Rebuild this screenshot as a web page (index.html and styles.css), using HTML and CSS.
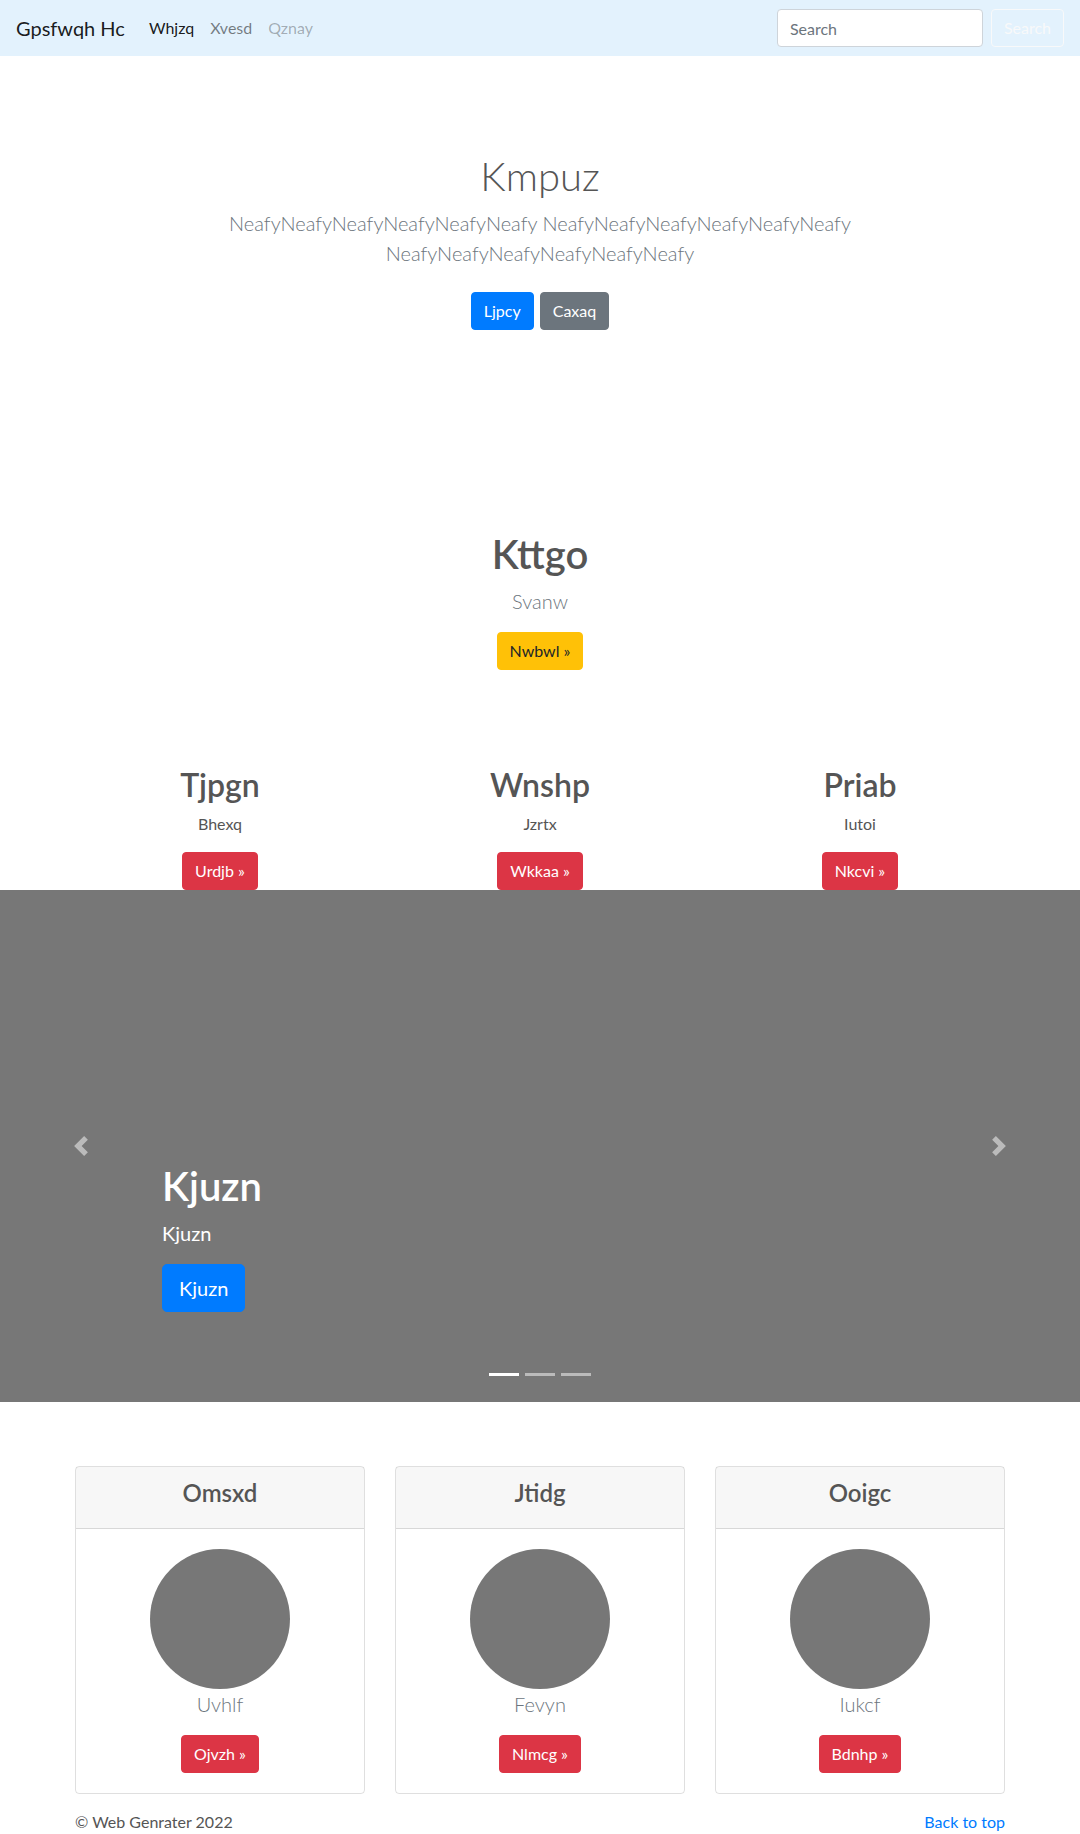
FILE: index.html
```html
<!DOCTYPE html>
<html lang="en">
<head>
<meta charset="utf-8">
<title>Gpsfwqh Hc</title>
<link rel="stylesheet" href="styles.css">
</head>
<body>
<nav class="navbar">
  <a class="brand" href="#">Gpsfwqh Hc</a>
  <ul class="nav">
    <li><a class="nav-link active" href="#">Whjzq</a></li>
    <li><a class="nav-link" href="#">Xvesd</a></li>
    <li><a class="nav-link disabled" href="#">Qznay</a></li>
  </ul>
  <form class="search">
    <input class="search-input" type="search" placeholder="Search">
    <button class="btn btn-outline-light" type="button">Search</button>
  </form>
</nav>

<main>
  <section class="jumbotron">
    <div class="jumbo-container">
      <h1 class="jumbo-heading">Kmpuz</h1>
      <p class="lead muted">NeafyNeafyNeafyNeafyNeafyNeafy NeafyNeafyNeafyNeafyNeafyNeafy NeafyNeafyNeafyNeafyNeafyNeafy</p>
      <p class="btn-row"><a class="btn btn-primary" href="#">Ljpcy</a><a class="btn btn-secondary" href="#">Caxaq</a></p>
    </div>
  </section>

  <section class="feature">
    <h1 class="feature-title">Kttgo</h1>
    <p class="lead muted">Svanw</p>
    <p class="last"><a class="btn btn-warning" href="#">Nwbwl »</a></p>
  </section>

  <section class="container columns">
    <div class="col">
      <h2 class="col-title">Tjpgn</h2>
      <p>Bhexq</p>
      <p class="last"><a class="btn btn-danger" href="#">Urdjb »</a></p>
    </div>
    <div class="col">
      <h2 class="col-title">Wnshp</h2>
      <p>Jzrtx</p>
      <p class="last"><a class="btn btn-danger" href="#">Wkkaa »</a></p>
    </div>
    <div class="col">
      <h2 class="col-title">Priab</h2>
      <p>Iutoi</p>
      <p class="last"><a class="btn btn-danger" href="#">Nkcvi »</a></p>
    </div>
  </section>

  <section class="carousel">
    <ol class="indicators">
      <li class="indicator active"></li>
      <li class="indicator"></li>
      <li class="indicator"></li>
    </ol>
    <a class="control control-prev" href="#">
      <svg class="control-icon" viewBox="0 0 8 8" width="20" height="20"><path fill="#fff" d="M5.25 0l-4 4 4 4 1.5-1.5L4.25 4l2.5-2.5L5.25 0z"/></svg>
    </a>
    <a class="control control-next" href="#">
      <svg class="control-icon" viewBox="0 0 8 8" width="20" height="20"><path fill="#fff" d="M2.75 0l-1.5 1.5L3.75 4l-2.5 2.5L2.75 8l4-4-4-4z"/></svg>
    </a>
    <div class="caption">
      <h1 class="caption-title">Kjuzn</h1>
      <p class="caption-text">Kjuzn</p>
      <p class="caption-actions"><a class="btn btn-lg btn-primary" href="#">Kjuzn</a></p>
    </div>
  </section>

  <section class="container cards">
    <div class="card">
      <div class="card-header"><h4 class="card-title">Omsxd</h4></div>
      <div class="card-body">
        <div class="avatar"></div>
        <p class="lead muted">Uvhlf</p>
        <p class="last"><a class="btn btn-danger" href="#">Ojvzh »</a></p>
      </div>
    </div>
    <div class="card">
      <div class="card-header"><h4 class="card-title">Jtidg</h4></div>
      <div class="card-body">
        <div class="avatar"></div>
        <p class="lead muted">Fevyn</p>
        <p class="last"><a class="btn btn-danger" href="#">Nlmcg »</a></p>
      </div>
    </div>
    <div class="card">
      <div class="card-header"><h4 class="card-title">Ooigc</h4></div>
      <div class="card-body">
        <div class="avatar"></div>
        <p class="lead muted">Iukcf</p>
        <p class="last"><a class="btn btn-danger" href="#">Bdnhp »</a></p>
      </div>
    </div>
  </section>

  <footer class="container footer">
    <p>© Web Genrater 2022</p>
    <p><a class="link" href="#">Back to top</a></p>
  </footer>
</main>
</body>
</html>
```
FILE: styles.css
```css
* { box-sizing: border-box; }
html, body { margin: 0; padding: 0; }
body {
  font-family: Lato, "Noto Sans", sans-serif;
  font-size: 16px;
  line-height: 1.5;
  color: #555;
  background: #fff;
}
a { text-decoration: none; }
p { margin: 0 0 16px; }
h1, h2, h4 { margin: 0 0 8px; line-height: 1.2; }

/* navbar */
.navbar {
  display: flex;
  align-items: center;
  height: 56px;
  padding: 8px 16px;
  background: #e3f2fd;
}
.brand {
  font-size: 20px;
  line-height: 30px;
  padding: 5px 0;
  margin-right: 16px;
  color: rgba(0,0,0,.9);
}
.nav {
  display: flex;
  list-style: none;
  margin: 0;
  padding: 0;
  flex: 1;
}
.nav-link {
  display: block;
  padding: 8px;
  color: rgba(0,0,0,.5);
}
.nav-link.active { color: rgba(0,0,0,.9); }
.nav-link.disabled { color: rgba(0,0,0,.3); }
.search { display: flex; align-items: center; }
.search-input {
  width: 206px;
  height: 38px;
  padding: 6px 12px;
  font: inherit;
  font-size: 16px;
  color: #495057;
  background: #fff;
  border: 1px solid #ced4da;
  border-radius: 4px;
  margin-right: 8px;
}
.search-input::placeholder { color: #6c757d; }

/* buttons */
.btn {
  display: inline-block;
  font-family: inherit;
  font-size: 16px;
  line-height: 24px;
  padding: 6px 12px;
  border: 1px solid transparent;
  border-radius: 4px;
  text-align: center;
  vertical-align: middle;
}
.btn-lg { font-size: 20px; line-height: 30px; padding: 8px 16px; border-radius: 5px; }
.btn-primary { background: #007bff; border-color: #007bff; color: #fff; }
.btn-secondary { background: #6c757d; border-color: #6c757d; color: #fff; }
.btn-warning { background: #ffc107; border-color: #ffc107; color: #212529; }
.btn-danger { background: #dc3545; border-color: #dc3545; color: #fff; }
.btn-outline-light { background: transparent; border-color: #f8f9fa; color: #f8f9fa; }

.lead { font-size: 20px; line-height: 30px; font-weight: 300; }
.muted { color: #6c757d; }
.last { margin-bottom: 0; }

/* jumbotron */
.jumbotron {
  padding: 96px 16px;
  text-align: center;
}
.jumbo-container { max-width: 660px; margin: 0 auto; }
.jumbo-heading { font-size: 40px; font-weight: 300; }
.btn-row {
  display: flex;
  justify-content: center;
  gap: 6px;
  margin: 0;
  padding: 8px 0;
}

/* feature */
.feature { padding: 96px 16px; text-align: center; }
.feature-title { font-size: 40px; font-weight: 600; }

/* columns */
.container { width: 960px; margin: 0 auto; padding: 0 15px; }
.columns {
  display: grid;
  grid-template-columns: repeat(3, 1fr);
  margin: 0 auto;
  padding: 0;
}
.col { padding: 0 15px; text-align: center; }
.col-title { font-size: 32px; font-weight: 600; }

/* carousel */
.carousel {
  position: relative;
  height: 512px;
  background: #777;
  overflow: hidden;
}
.control {
  position: absolute;
  top: 0;
  bottom: 0;
  width: 15%;
  display: flex;
  align-items: center;
  justify-content: center;
  opacity: .5;
}
.control-prev { left: 0; }
.control-next { right: 0; }
.control-icon { display: block; }
.caption {
  position: absolute;
  left: 15%;
  right: 15%;
  bottom: 54px;
  padding: 20px 0;
  color: #fff;
  text-align: left;
}
.caption-title { font-size: 40px; font-weight: 600; }
.caption-text { font-size: 20px; line-height: 30px; }
.caption-actions { margin-bottom: 16px; }
.indicators {
  position: absolute;
  left: 0;
  right: 0;
  bottom: 0;
  margin: 0 0 16px;
  padding: 0;
  list-style: none;
  display: flex;
  justify-content: center;
}
.indicator {
  width: 30px;
  height: 3px;
  margin: 10px 3px;
  background: #fff;
  opacity: .5;
}
.indicator.active { opacity: 1; }

/* cards */
.cards {
  display: flex;
  gap: 30px;
  padding-top: 64px;
}
.card {
  flex: 1 1 0;
  border: 1px solid rgba(0,0,0,.125);
  border-radius: 4px;
  text-align: center;
}
.card-header {
  padding: 12px 20px;
  background: rgba(0,0,0,.03);
  border-bottom: 1px solid rgba(0,0,0,.125);
}
.card-title { font-size: 24px; font-weight: 600; }
.card-body { padding: 20px; }
.avatar {
  width: 140px;
  height: 140px;
  border-radius: 50%;
  background: #777;
  margin: 0 auto;
}

/* footer */
.footer {
  display: flex;
  justify-content: space-between;
  margin-top: 16px;
}
.link { color: #007bff; }
```
